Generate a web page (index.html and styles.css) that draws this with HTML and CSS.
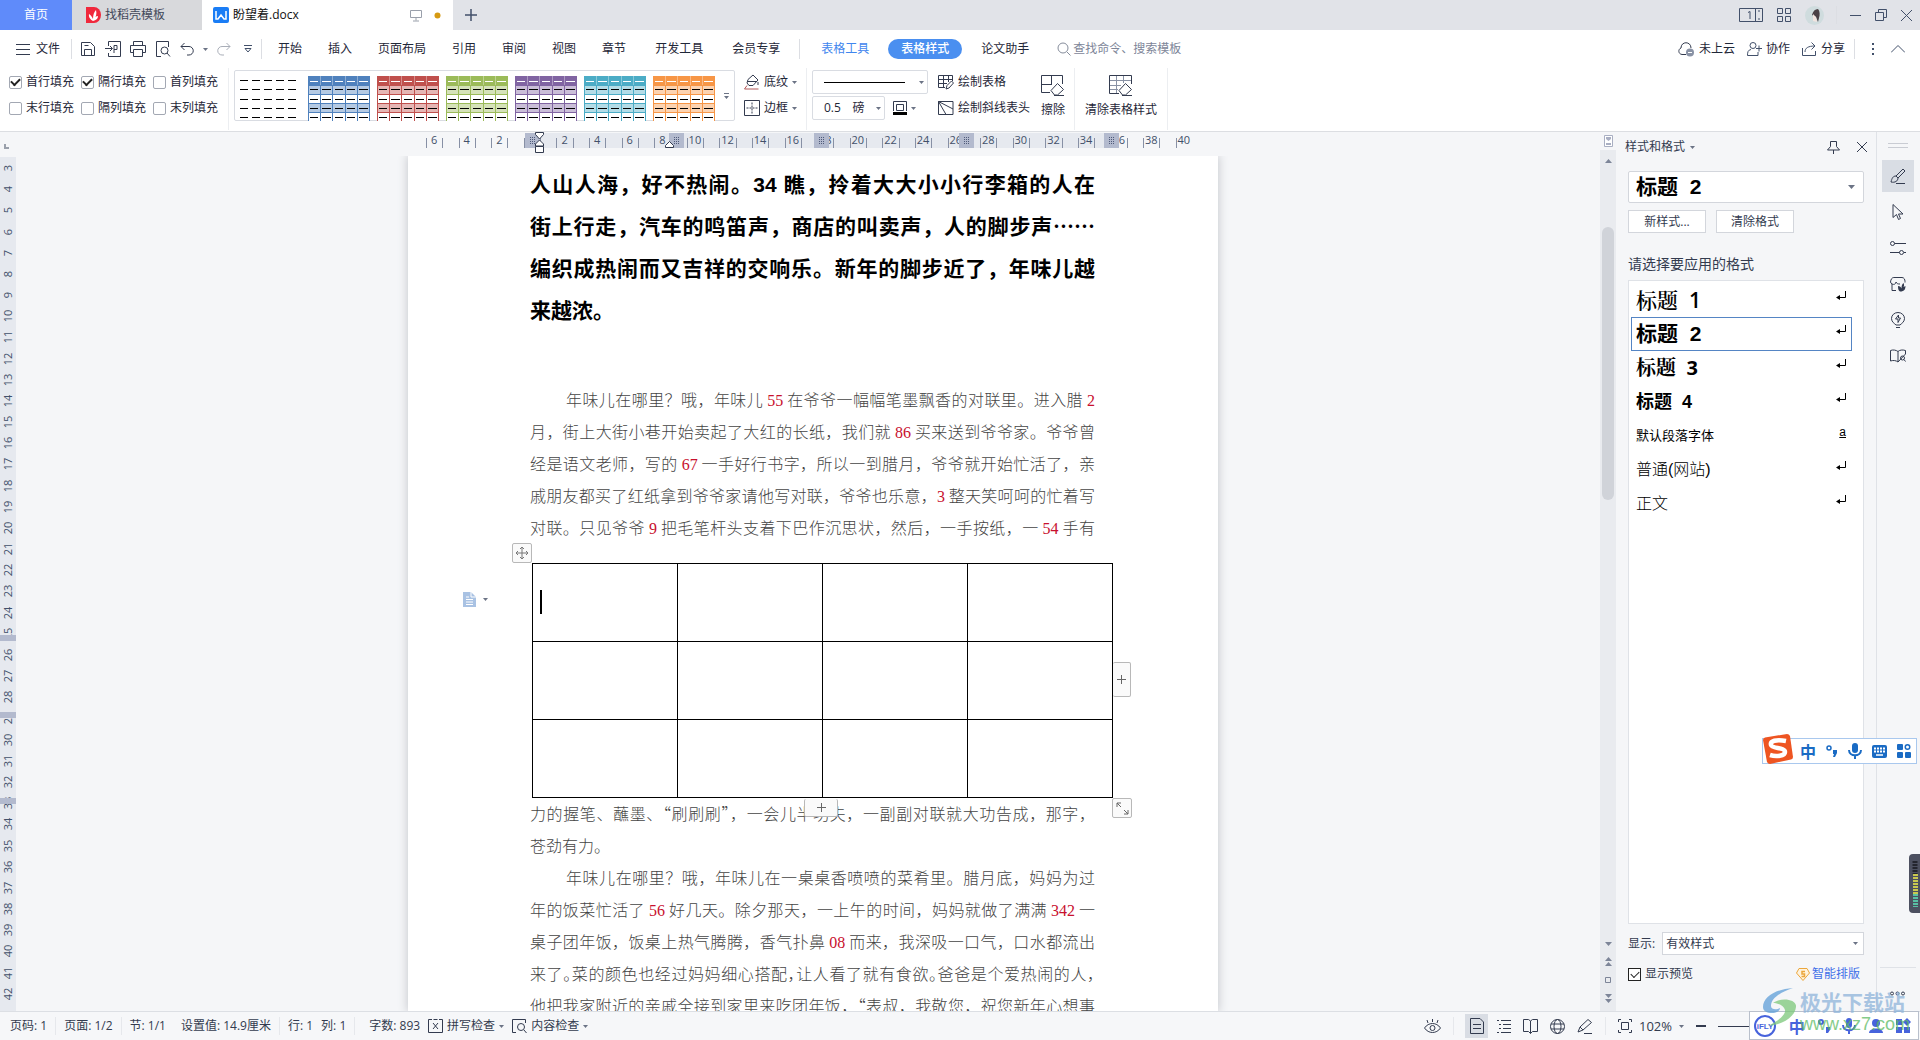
FILE: index.html
```html
<!DOCTYPE html>
<html lang="zh-CN">
<head>
<meta charset="utf-8">
<title>盼望着.docx</title>
<link rel="stylesheet" href="styles.css">
</head>
<body>
<svg class="defs" aria-hidden="true">
  <symbol id="thumb" viewBox="0 0 62 45">
    <rect width="62" height="45" fill="#fff"/>
    <rect width="62" height="9" fill="currentColor"/>
    <path d="M0 9h62v9H0zM0 27h62v9H0z" fill="currentColor" fill-opacity=".42"/>
    <path d="M.5 9v36M12.5 9v36M24.5 9v36M37.5 9v36M49.5 9v36M61.5 9v36M0 9.500h62M0 18.500h62M0 27.500h62M0 36.500h62" stroke="currentColor" fill="none"/>
    <path d="M12.500 0v9M24.500 0v9M37.500 0v9M49.500 0v9" stroke="#fff" stroke-opacity=".35"/>
    <path d="M2 5.500h8M14 5.500h9M27 5.500h8M39 5.500h8M51 5.500h9" stroke="#fff"/>
    <path d="M2 13.500h8M14 13.500h9M27 13.500h8M39 13.500h8M51 13.500h9M2 23.500h8M14 23.500h9M27 23.500h8M39 23.500h8M51 23.500h9M2 32.500h8M14 32.500h9M27 32.500h8M39 32.500h8M51 32.500h9M2 41.500h8M14 41.500h9M27 41.500h8M39 41.500h8M51 41.500h9" stroke="#000"/>
  </symbol>
  <symbol id="ret" viewBox="0 0 10 10"><path d="M9.500 0v6.500H2" fill="none" stroke="#000"/><path d="M0 6.500L4 4v5z"/></symbol>
  <symbol id="mic" viewBox="0 0 14 16"><rect x="4" width="6" height="10" rx="3" fill="currentColor"/><path d="M1 7c0 7 12 7 12 0M7 12v4" fill="none" stroke="currentColor" stroke-width="2"/></symbol>
</svg>

<header class="tabbar">
  <button class="tab tab-home">首页</button>
  <button class="tab tab-tpl">
    <svg width="15" height="16" viewBox="0 0 15 16"><path d="M0 0h8a7 8 0 0 1 0 16H0z" fill="#f0283c"/><path d="M7 14C2 11 3 8 3 7c2 1 3 3 4 5 0-4 1-7 3-9 1 4 0 7-2 9 1-2 2-3 4-3 0 3-2 4-5 5z" fill="#fff"/></svg>
    找稻壳模板</button>
  <button class="tab tab-doc">
    <svg width="16" height="16" viewBox="0 0 16 16"><rect width="16" height="16" rx="2" fill="#1a7df5"/><path d="M3 4v8h2l3-4 3 4h2V4" fill="none" stroke="#fff" stroke-width="1.500"/></svg>
    <span>盼望着.docx</span>
    <svg class="push" width="12" height="13" viewBox="0 0 12 13" fill="none" stroke="#9aa0ab"><path d="M.5 1.500h11v7H.500zM6 8.500v3M3 12h6"/></svg>
    <svg width="7" height="7"><circle cx="3.500" cy="3.500" r="3" fill="#d69a12"/></svg>
  </button>
  <button class="icon-btn plus" aria-label="新建"><svg width="12" height="12" viewBox="0 0 12 12"><path d="M6 0v12M0 6h12" stroke="#42506a" stroke-width="1.500"/></svg></button>
  <div class="win">
    <svg width="24" height="14" viewBox="0 0 24 14" fill="none" stroke="#42506a"><path d="M.5.500h23v13H.500zM16.500.500v13M19 3h2M19 11h2M9 4.500l2-1V11"/></svg>
    <svg width="14" height="14" viewBox="0 0 14 14" fill="none" stroke="#42506a"><path d="M.5.500h5v5h-5zM8.500.500h5v5h-5zM.5 8.500h5v5h-5zM8.500 8.500h5v5h-5z"/></svg>
    <svg width="19" height="19" viewBox="0 0 19 19"><circle cx="9.500" cy="9.500" r="9.500" fill="#cfdcde"/><path d="M7 9c1-4 3-6 6-6 2 2 2 6 1 9l-1 4-2-5z" fill="#4a4046"/><path d="M8 8l3 3 1 5-4-1z" fill="#f2e4e0"/></svg>
    <span class="vsep"></span>
    <svg width="11" height="11" viewBox="0 0 11 11" stroke="#42506a"><path d="M0 5.500h11"/></svg>
    <svg width="12" height="12" viewBox="0 0 12 12" fill="none" stroke="#42506a"><path d="M.5 3.500h8v8h-8zM3.500 3V.500h8v8H9"/></svg>
    <svg width="11" height="11" viewBox="0 0 11 11" stroke="#42506a"><path d="M0 0l11 11M11 0L0 11"/></svg>
  </div>
</header>

<nav class="menubar">
  <button class="file"><svg width="14" height="11" viewBox="0 0 14 11" stroke="#333b4f"><path d="M0 .5h14M0 5.500h14M0 10.500h14"/></svg>文件</button>
  <span class="vsep tall"></span>
  <div class="quick">
    <svg width="16" height="16" viewBox="0 0 16 16" fill="none" stroke="#333b4f"><path d="M1.500 1.500h9l4 4v9h-13zM4.500 14V8.500h7V14M4.500 4.500h4"/></svg>
    <svg width="16" height="16" viewBox="0 0 16 16" fill="none" stroke="#333b4f"><path d="M3.500 5V.500h12v15h-12V12M0 7.500h7M5 5l2.500 2.500L5 10M9 12V4.500h3v4H9"/></svg>
    <svg width="16" height="16" viewBox="0 0 16 16" fill="none" stroke="#333b4f"><path d="M3.500 4.500v-4h9v4M3 11.500H.500v-7h15v7H13M3.500 8.500h9v7h-9z"/></svg>
    <svg width="16" height="16" viewBox="0 0 16 16" fill="none" stroke="#333b4f"><path d="M6 15.500H1.500V.500h12V6M12 12l3 3.500"/><circle cx="9.500" cy="9.500" r="3.500"/></svg>
    <svg width="14" height="14" viewBox="0 0 14 14" fill="none" stroke="#333b4f"><path d="M4.500 1L1 4.500 4.500 8M1 4.500h8a4 4 0 0 1 0 8.500H7"/></svg>
    <svg class="caret" width="5" height="3" viewBox="0 0 5 3"><path d="M0 0h5L2.500 3z"/></svg>
    <svg width="14" height="14" viewBox="0 0 14 14" fill="none" stroke="#a9aeb8"><path d="M9.500 1L13 4.500 9.500 8M13 4.500H5A4 4 0 0 0 5 13h2"/></svg>
    <svg class="last" width="8" height="8" viewBox="0 0 8 8" fill="none" stroke="#42506a"><path d="M0 .5h8M1 3.500h6L4 7z"/></svg>
  </div>
  <span class="vsep tall"></span>
  <div class="menu">
    <button>开始</button><button>插入</button><button>页面布局</button><button>引用</button><button>审阅</button><button>视图</button><button>章节</button>
  </div>
  <div class="menu more-menu">
    <button>开发工具</button><button>会员专享</button>
  </div>
  <span class="vsep tall"></span>
  <div class="menu ctx">
    <button class="blue">表格工具</button><button class="pill">表格样式</button><button>论文助手</button>
  </div>
  <label class="search"><svg width="14" height="14" viewBox="0 0 14 14" fill="none" stroke="#858c9b"><circle cx="6" cy="6" r="5"/><path d="M10 10l3.500 3.500"/></svg><input type="text" placeholder="查找命令、搜索模板"></label>
  <div class="share">
    <button><svg width="17" height="15" viewBox="0 0 17 15" fill="none" stroke="#333b4f"><path d="M8 12.500H4C0 12 0 7 3 6c0-7 10-7 10 0"/><circle cx="12" cy="10.500" r="4" fill="#8992a5" stroke="none"/><path d="M10 10.500h4" stroke="#fff"/></svg>未上云</button>
    <button><svg width="15" height="14" viewBox="0 0 15 14" fill="none" stroke="#42506a"><circle cx="6" cy="3.500" r="3"/><path d="M4 7.500C1 8 .5 10 .5 13.500h10.500V10M9 6.500h6M12 3.500v6"/></svg>协作</button>
    <button><svg width="15" height="14" viewBox="0 0 15 14" fill="none" stroke="#42506a"><path d="M.5 6v7.500h13V9M3 10c0-4 3-6 10-6M9.500.500L13 4 9.500 7.500"/></svg>分享</button>
    <span class="vsep tall"></span>
    <svg width="3" height="12" viewBox="0 0 3 12" fill="#42506a"><path d="M0 0h2v2H0zM0 5h2v2H0zM0 10h2v2H0z"/></svg>
    <svg class="fold" width="14" height="8" viewBox="0 0 14 8" fill="none" stroke="#42506a"><path d="M0 7.500l7-7 7 7"/></svg>
  </div>
</nav>

<section class="ribbon">
  <div class="checks">
    <label><input type="checkbox" checked>首行填充</label><label><input type="checkbox" checked>隔行填充</label><label><input type="checkbox">首列填充</label>
    <label><input type="checkbox">末行填充</label><label><input type="checkbox">隔列填充</label><label><input type="checkbox">末列填充</label>
  </div>
  <span class="vsep full"></span>
  <div class="gallery">
    <svg width="62" height="45" viewBox="0 0 62 45"><path d="M1 4.500h59M1 13.500h59M1 23.500h59M1 32.500h59M1 41.500h59" stroke="#000" stroke-dasharray="8 4"/></svg>
    <svg class="g1" width="62" height="45"><use href="#thumb"/></svg>
    <svg class="g2" width="62" height="45"><use href="#thumb"/></svg>
    <svg class="g3" width="62" height="45"><use href="#thumb"/></svg>
    <svg class="g4" width="62" height="45"><use href="#thumb"/></svg>
    <svg class="g5" width="62" height="45"><use href="#thumb"/></svg>
    <svg class="g6" width="62" height="45"><use href="#thumb"/></svg>
    <button class="icon-btn more" aria-label="更多样式"><svg class="caret" width="5" height="6" viewBox="0 0 5 6"><path d="M0 0h5v1H0zM0 3h5L2.500 6z"/></svg></button>
  </div>
  <div class="col">
    <button class="tool"><svg width="16" height="16" viewBox="0 0 16 16" fill="none" stroke="#333b4f"><path d="M4 5.500L9 1l5 5-5 5.500H5L3 9zM3 7.500h10"/><path d="M14 8v3"/><path d="M3 11.500L.500 15h14" stroke="#b05858"/></svg>底纹<svg class="caret" width="5" height="3"><path d="M0 0h5L2.500 3z"/></svg></button>
    <button class="tool"><svg width="16" height="16" viewBox="0 0 16 16" fill="none" stroke="#333b4f"><path d="M.5.500h15v15H.500z"/><path d="M8 2.500v11M2.500 8h11" stroke-dasharray="2 1"/></svg>边框<svg class="caret" width="5" height="3"><path d="M0 0h5L2.500 3z"/></svg></button>
  </div>
  <span class="vsep full"></span>
  <div class="col lines">
    <button class="combo line" aria-label="线型"><i></i><svg class="caret" width="5" height="3"><path d="M0 0h5L2.500 3z"/></svg></button>
    <div class="row">
      <button class="combo weight"><span>0.5</span><span>磅</span><svg class="caret" width="5" height="3"><path d="M0 0h5L2.500 3z"/></svg></button>
      <button class="tool" aria-label="边框颜色"><svg width="14" height="14" viewBox="0 0 14 14" fill="none"><path d="M.5 10V.500h13V10M3.500 9.500v-6h7v6z" stroke="#333b4f"/><path d="M0 11h14v3H0z" fill="#000"/></svg><svg class="caret" width="5" height="3"><path d="M0 0h5L2.500 3z"/></svg></button>
    </div>
  </div>
  <div class="col draw">
    <button class="tool"><svg width="16" height="15" viewBox="0 0 16 15" fill="none" stroke="#333b4f"><path d="M7 12.500H.500V.500h14V6M.5 4.500h14M.5 8.500H9M5.500.500v12M10.500.500V7M8 14l1-3.500L13.500 6l2 2L11 13z"/></svg>绘制表格</button>
    <button class="tool"><svg width="16" height="14" viewBox="0 0 16 14" fill="none" stroke="#333b4f"><path d="M.5.500h14.500v13H.500zM.5.500L15 8M.5.500L8 13.500"/></svg>绘制斜线表头</button>
  </div>
  <button class="big"><svg width="24" height="21" viewBox="0 0 24 21" fill="none" stroke="#333b4f"><path d="M9 17.500H.500V.500h21V9M10.500.500v9M.5 9.500H11"/><path d="M10 15.500l6.500-7 6 6-6 5.500h-3zM13 20.500h10"/></svg>擦除</button>
  <span class="vsep full"></span>
  <button class="big wide"><svg width="24" height="21" viewBox="0 0 24 21" fill="none" stroke="#333b4f"><path d="M10 18.500H.500V.500h22V9"/><path d="M1 5.500h21M1 10.500h11M1 14.500h8M7.500 1v17M14.500 1v7" stroke="#8992a5"/><path d="M10 15.500l6.500-7 6 6-6 5.500h-3zM13 20.500h10"/></svg>清除表格样式</button>
  <span class="vsep full"></span>
</section>

<main class="work">
  <aside class="vruler">
    <div class="vcorner"><svg width="5" height="5"><path d="M1 0v4h4" fill="none" stroke="#9aa0ab" stroke-width="2"/></svg></div>
    <div class="vnums"><i>3</i><i>4</i><i>5</i><i>6</i><i>7</i><i>8</i><i>9</i><i>10</i><i>11</i><i>12</i><i>13</i><i>14</i><i>15</i><i>16</i><i>17</i><i>18</i><i>19</i><i>20</i><i>21</i><i>22</i><i>23</i><i>24</i><i>25</i><i>26</i><i>27</i><i>28</i><i>29</i><i>30</i><i>31</i><i>32</i><i>33</i><i>34</i><i>35</i><i>36</i><i>37</i><i>38</i><i>39</i><i>40</i><i>41</i><i>42</i>
      <b class="vm1"></b><b class="vm2"></b><b class="vm3"></b></div>
  </aside>
  <div class="canvas">
    <div class="hruler"><div class="hnums">
      <i>6</i><i></i><i>4</i><i></i><i>2</i><i></i><i></i><i></i><i>2</i><i></i><i>4</i><i></i><i>6</i><i></i><i>8</i><i></i><i>10</i><i></i><i>12</i><i></i><i>14</i><i></i><i>16</i><i></i><i>18</i><i></i><i>20</i><i></i><i>22</i><i></i><i>24</i><i></i><i>26</i><i></i><i>28</i><i></i><i>30</i><i></i><i>32</i><i></i><i>34</i><i></i><i>36</i><i></i><i>38</i><i></i><i>40</i><i></i>
      </div>
      <b class="hm1"></b><b class="hm2"></b><b class="hm3"></b><b class="hm4"></b><b class="hm5"></b>
      <svg class="indent" width="10" height="21" viewBox="0 0 10 21" fill="#fff" stroke="#333b4f"><path d="M.5.500h8v2l-4 4.500-4-4.500zM4.500 8l4 4v2h-8v-2zM.5 14.500h8v6h-8z"/></svg>
      <svg class="indent2" width="9" height="7" viewBox="0 0 9 7" fill="#fff" stroke="#333b4f"><path d="M4.500.500l4 4v2h-8v-2z"/></svg>
    </div>
    <article class="page">
      <div class="heading">
        <p>人山人海，好不热闹。34 瞧，拎着大大小小行李箱的人在</p>
        <p>街上行走，汽车的鸣笛声，商店的叫卖声，人的脚步声⋯⋯</p>
        <p>编织成热闹而又吉祥的交响乐。新年的脚步近了，年味儿越</p>
        <p class="end">来越浓。</p>
      </div>
      <div class="text">
        <p class="first">年味儿在哪里？哦，年味儿 <em>55</em> 在爷爷一幅幅笔墨飘香的对联里。进入腊 <em>2</em></p>
        <p>月，街上大街小巷开始卖起了大红的长纸，我们就 <em>86</em> 买来送到爷爷家。爷爷曾</p>
        <p>经是语文老师，写的 <em>67</em> 一手好行书字，所以一到腊月，爷爷就开始忙活了，亲</p>
        <p>戚朋友都买了红纸拿到爷爷家请他写对联，爷爷也乐意，<em>3</em> 整天笑呵呵的忙着写</p>
        <p>对联。只见爷爷 <em>9</em> 把毛笔杆头支着下巴作沉思状，然后，一手按纸，一 <em>54</em> 手有</p>
      </div>
      <div class="tablewrap">
        <table><tbody>
          <tr><td><span class="cursor"></span></td><td></td><td></td><td></td></tr>
          <tr><td></td><td></td><td></td><td></td></tr>
          <tr><td></td><td></td><td></td><td></td></tr>
        </tbody></table>
        <button class="h move" aria-label="移动表格"><svg width="14" height="14" viewBox="0 0 14 14" fill="none" stroke="#777"><path d="M7 1v12M1 7h12M5 3l2-2 2 2M5 11l2 2 2-2M3 5L1 7l2 2M11 5l2 2-2 2"/></svg></button>
        <button class="h addcol" aria-label="添加列"><svg width="9" height="9" viewBox="0 0 9 9"><path d="M4.500 0v9M0 4.500h9" stroke="#666"/></svg></button>
        <button class="h addrow" aria-label="添加行"><svg width="9" height="9" viewBox="0 0 9 9"><path d="M4.500 0v9M0 4.500h9" stroke="#666"/></svg></button>
        <button class="h resize" aria-label="调整大小"><svg width="13" height="13" viewBox="0 0 13 13" stroke="#666" fill="none"><path d="M1 5V1h4M1 1l4 4M12 8v4H8M12 12L8 8"/></svg></button>
        <button class="h docopt" aria-label="版式"><svg width="13" height="15" viewBox="0 0 13 15"><path d="M0 0h8l5 5v10H0z" fill="#a9c2e3"/><path d="M8 0v5h5M3 5h3M3 7.500h7M3 10h7M3 12.500h7" stroke="#fff" fill="none"/></svg><svg class="caret" width="5" height="3"><path d="M0 0h5L2.500 3z"/></svg></button>
      </div>
      <div class="text">
        <p>力的握笔、蘸墨、“刷刷刷”，一会儿半功夫，一副副对联就大功告成，那字，</p>
        <p class="end">苍劲有力。</p>
        <p class="first">年味儿在哪里？哦，年味儿在一桌桌香喷喷的菜肴里。腊月底，妈妈为过</p>
        <p>年的饭菜忙活了 <em>56</em> 好几天。除夕那天，一上午的时间，妈妈就做了满满 <em>342</em> 一</p>
        <p>桌子团年饭，饭桌上热气腾腾，香气扑鼻 <em>08</em> 而来，我深吸一口气，口水都流出</p>
        <p class="tight">来了。菜的颜色也经过妈妈细心搭配，让人看了就有食欲。爸爸是个爱热闹的人，</p>
        <p>他把我家附近的亲戚全接到家里来吃团年饭，“表叔，我敬您，祝您新年心想事</p>
      </div>
    </article>
  </div>
  <div class="scroll">
    <svg width="9" height="12" viewBox="0 0 9 12"><path d="M.5.500h8v11h-8z" fill="#fff" stroke="#a9afc2"/><path d="M2 2h5v2L4.500 6 2 4zM2 8h5v2H2z" fill="#a9afc2"/></svg>
    <div class="track">
      <svg width="7" height="4"><path d="M0 4h7L3.500 0z"/></svg>
      <span class="thumb"></span>
      <svg width="7" height="4"><path d="M0 0h7L3.500 4z"/></svg>
      <svg width="7" height="9"><path d="M0 4h7L3.500 0zM0 9h7L3.500 5z"/></svg>
      <svg width="7" height="6"><path d="M.5.500h5v5h-5z" fill="none" stroke="#7d8598"/></svg>
      <svg width="7" height="9"><path d="M0 0h7L3.500 4zM0 5h7L3.500 9z"/></svg>
    </div>
  </div>
  <aside class="panel">
    <div class="phead"><span>样式和格式</span><svg class="caret" width="5" height="3"><path d="M0 0h5L2.500 3z"/></svg>
      <svg class="push" width="14" height="13" viewBox="0 0 14 13" fill="none" stroke="#333b4f"><path d="M3.500.500h6v5l3 3.500H.500l3-3.500zM6.500 9v4"/></svg>
      <svg width="10" height="10" viewBox="0 0 10 10" stroke="#333b4f"><path d="M0 0l10 10M10 0L0 10"/></svg></div>
    <button class="cur"><span>标题&nbsp; 2</span><svg class="caret" width="7" height="4"><path d="M0 0h7L3.500 4z"/></svg></button>
    <div class="btns"><button>新样式...</button><button>清除格式</button></div>
    <h2>请选择要应用的格式</h2>
    <ul class="styles">
      <li class="s1">标题&nbsp; 1<svg width="10" height="10"><use href="#ret"/></svg></li>
      <li class="s2 on">标题&nbsp; 2<svg width="10" height="10"><use href="#ret"/></svg></li>
      <li class="s3">标题&nbsp; 3<svg width="10" height="10"><use href="#ret"/></svg></li>
      <li class="s4">标题&nbsp; 4<svg width="10" height="10"><use href="#ret"/></svg></li>
      <li class="s5">默认段落字体<u>a</u></li>
      <li class="s6">普通(网站)<svg width="10" height="10"><use href="#ret"/></svg></li>
      <li class="s6">正文<svg width="10" height="10"><use href="#ret"/></svg></li>
    </ul>
    <div class="show"><label for="show">显示:</label><div class="selwrap"><select id="show"><option>有效样式</option></select><svg class="caret" width="5" height="3"><path d="M0 0h5L2.500 3z"/></svg></div></div>
    <div class="pfoot"><label><input class="dark" type="checkbox" checked>显示预览</label>
      <a href="#"><svg width="14" height="13" viewBox="0 0 14 13"><path d="M3 .5h8L13.500 5 7 12.500.500 5z" fill="#fff3dd" stroke="#eba63c"/><path d="M9 3.500H6v2.500h2.500v2.500h-3" fill="none" stroke="#eba63c" stroke-width="1.500"/></svg>智能排版</a></div>
  </aside>
  <aside class="side">
    <span class="grip"></span>
    <button class="on" aria-label="样式"><svg width="16" height="16" viewBox="0 0 16 16" fill="none" stroke="#333b4f"><path d="M6 8l7-7 2 2-7 7zM6 8c-3 0-4 2-5 6 4 1 7-1 7-4M6 15.500h9"/></svg></button>
    <button aria-label="选择"><svg width="14" height="16" viewBox="0 0 14 16" fill="none" stroke="#333b4f"><path d="M2 .5v13l3.500-3 2 5 2-1-2-4.500H12z"/></svg></button>
    <button aria-label="设置"><svg width="16" height="14" viewBox="0 0 16 14" fill="none" stroke="#333b4f"><circle cx="2.500" cy="2.500" r="2"/><path d="M4.500 2.500H16M0 11.500h9.500M14 11.500h2"/><circle cx="11.500" cy="11.500" r="2"/></svg></button>
    <button aria-label="素材"><svg width="16" height="15" viewBox="0 0 16 15" fill="none" stroke="#333b4f"><path d="M6 13.500H2V7C0 6 .5 4 1 3c.500-2 2-2.500 3-2.500h8c2 0 3 2 3 4v1M2 7c2 1 4 0 4-2 1 2 2 2 4 2"/><path d="M8 9c2 0 3 1 3.500 2.500C11.500 9 12 7 13.500 6c1 2 .5 3 0 4l2-1c0 3-1 5-4 5.500S8 12 8 9z" fill="#333b4f" stroke="none"/></svg></button>
    <button aria-label="灵感"><svg width="14" height="16" viewBox="0 0 14 16" fill="none" stroke="#333b4f"><path d="M5 13C3.500 11.500.500 10 .5 6.500a6.500 6 0 0 1 13 0C13.500 10 10.500 11.500 9 13zM5 15.500h4M7.500 3L4.500 7H7v3.500L9.500 6H7.500z"/></svg></button>
    <button aria-label="帮助"><svg width="16" height="14" viewBox="0 0 16 14" fill="none" stroke="#333b4f"><path d="M15.500 5V1.500c-3-1-6-.5-7.500 1C6 1 3 .5.500 1.500v10.500c3-1 5.500-.5 7.500 1zM8 2.500v10.500"/><circle cx="12.500" cy="9" r="2"/><path d="M14 10.500l1.500 2"/></svg></button>
    <span class="sidemore"><svg width="15" height="5" viewBox="0 0 15 5" fill="none" stroke="#333b4f"><circle cx="2" cy="2.500" r="1.500"/><circle cx="7.500" cy="2.500" r="1.500"/><circle cx="13" cy="2.500" r="1.500"/></svg></span>
  </aside>
</main>

<footer class="status">
  <span>页码: 1</span><i class="vsep"></i><span>页面: 1/2</span><i class="vsep"></i><span>节: 1/1</span><span class="set">设置值: 14.9厘米</span><i class="vsep"></i><span>行: 1</span><span>列: 1</span><i class="vsep"></i><span class="count">字数: 893</span>
  <button><svg width="15" height="14" viewBox="0 0 15 14" fill="none" stroke="#333b4f"><path d="M4 .5H.500v13h14V.500H11M5 4l5 6M10 4l-5 6M5.500.500h4"/></svg>拼写检查<svg class="caret" width="5" height="3"><path d="M0 0h5L2.500 3z"/></svg></button>
  <button><svg width="15" height="14" viewBox="0 0 15 14" fill="none" stroke="#333b4f"><path d="M4 13.500H.500V.500h13V4M12 11l2.500 3"/><circle cx="9" cy="8" r="3.500"/></svg>内容检查<svg class="caret" width="5" height="3"><path d="M0 0h5L2.500 3z"/></svg></button>
  <div class="views">
    <svg width="17" height="14" viewBox="0 0 17 14" fill="none" stroke="#333b4f"><path d="M.5 9c4-6 12-6 16 0-4 6-12 6-16 0zM8.500 0v3M3 1l1 3M14 1l-1 3"/><circle cx="8.500" cy="9" r="2.500"/></svg>
    <i class="vsep"></i>
    <span class="von"><svg width="14" height="16" viewBox="0 0 14 16" fill="none" stroke="#333b4f"><path d="M.5.500h9.500l3.500 3.500v11.500H.500zM3 6.500h8M3 10.500h8"/></svg></span>
    <svg width="14" height="14" viewBox="0 0 14 14" stroke="#333b4f"><path d="M0 1.500h2M4 1.500h10M2 5.500h2M6 5.500h8M2 9.500h2M6 9.500h8M0 13.500h2M4 13.500h10"/></svg>
    <svg width="15" height="15" viewBox="0 0 15 15" fill="none" stroke="#333b4f"><path d="M7.500 2v12.500M7.500 2l-2-1.500h-5v12h5l2 2 2-2h5V.500h-5z"/></svg>
    <svg width="15" height="15" viewBox="0 0 15 15" fill="none" stroke="#333b4f"><circle cx="7.500" cy="7.500" r="7"/><ellipse cx="7.500" cy="7.500" rx="3.500" ry="7"/><path d="M1 5h13M1 10h13"/></svg>
    <svg width="16" height="15" viewBox="0 0 16 15" fill="none" stroke="#333b4f"><path d="M1 13l2-5L11 .5 14.500 3.500 6 11zM3 8l3 3M7 14.500h8"/></svg>
    <i class="vsep"></i>
    <svg width="14" height="14" viewBox="0 0 14 14" fill="none" stroke="#333b4f"><path d="M.5 3V.500H3M11 .5h2.500V3M13.500 11v2.500H11M3 13.500H.500V11M3.500 3.500h7v7h-7z"/></svg>
    <span class="zoom">102%</span><svg class="caret" width="5" height="3"><path d="M0 0h5L2.500 3z"/></svg>
    <svg width="10" height="2"><path d="M0 0h10v2H0z" fill="#333b4f"/></svg>
    <span class="slider"></span>
  </div>
</footer>

<div class="ime sogou">
  <svg class="slogo" width="32" height="30" viewBox="0 0 32 30"><path d="M1 6q0-2 2-2.500L25 0q2 0 3 2l3 21q0 2-2 2.500L8 30q-2 0-3-2z" fill="#ee5522"/><path d="M24 7C14 5 8 7 9 11c1 4 14 2 14 7 0 4-9 5-15 3" fill="none" stroke="#fff" stroke-width="4.500"/></svg>
  <b>中</b>
  <svg width="12" height="12" viewBox="0 0 12 12"><circle cx="3" cy="3" r="2" fill="none" stroke="currentColor" stroke-width="1.500"/><path d="M7 5h4v3l-2 4H7l1-3H7z" fill="currentColor"/></svg>
  <svg width="14" height="16"><use href="#mic"/></svg>
  <svg width="15" height="13" viewBox="0 0 15 13"><rect width="15" height="13" rx="2" fill="currentColor"/><path d="M2 3.500h11M2 6.500h11" stroke="#fff" stroke-width="2" stroke-dasharray="2 1"/><path d="M4 10h7" stroke="#fff" stroke-width="1.500"/></svg>
  <svg width="14" height="14" viewBox="0 0 14 14" fill="currentColor"><rect width="6" height="6" rx="1"/><circle cx="10.500" cy="3" r="2.250" fill="none" stroke="currentColor" stroke-width="1.500"/><rect y="8" width="6" height="6" rx="1"/><rect x="8" y="8" width="6" height="6" rx="1"/></svg>
</div>
<svg class="meter" width="11" height="59" viewBox="0 0 11 59"><path d="M11 0H4Q0 0 0 4v51q0 4 4 4h7z" fill="#4c5060"/><path d="M6 7v13" stroke="#23252e" stroke-width="5" stroke-dasharray="2 1"/><path d="M6.500 20v20" stroke="#c8c850" stroke-width="5" stroke-dasharray="2 1"/><path d="M6.500 40v13" stroke="#58c0a4" stroke-width="5" stroke-dasharray="2 1"/></svg>
<div class="ime ifly">
  <svg width="22" height="22" viewBox="0 0 22 22"><circle cx="11" cy="11" r="10" fill="#fff" stroke="#4763dc" stroke-width="2"/><text x="11" y="14" text-anchor="middle" class="iflytext">iFLY</text></svg>
  <b>中</b>
  <svg width="12" height="14" viewBox="0 0 12 14"><circle cx="3" cy="3" r="2" fill="none" stroke="currentColor" stroke-width="2"/><path d="M8 8h4v3l-2 3H8z" fill="currentColor"/></svg>
  <svg width="14" height="16"><use href="#mic"/></svg>
  <svg width="14" height="14" viewBox="0 0 14 14" fill="currentColor"><circle cx="7" cy="4" r="4"/><path d="M0 14c0-6 14-6 14 0z"/></svg>
  <svg width="15" height="15" viewBox="0 0 15 15" fill="currentColor"><path d="M0 1h6v6H0zM0 9h6v6H0zM8 9h6v6H8zM11 0l4 4-4 4-4-4z"/></svg>
</div>
<div class="mark">
  <svg width="36" height="38" viewBox="0 0 36 38"><path d="M33 0C16 1 3 9 3 19c0 4 4 6 9 6 4 0 8-2 8-5-3 2-9 2-9-2C11 10 21 4 33 0z" fill="#5f9fd8"/><path d="M13 15c8-6 24-4 23 4-1 10-14 18-28 19 10-5 18-11 17-16-1-4-6-7-12-7z" fill="#7cc87a"/></svg>
  <div><strong>极光下载站</strong><span>www.xz7.com</span></div>
</div>
</body>
</html>
```
FILE: styles.css
```css
* { box-sizing: border-box; }
body {
  margin: 0;
  height: 100vh;
  display: flex;
  flex-direction: column;
  overflow: hidden;
  position: relative;
  background: #f5f6f8;
  color: #1f2738;
  font: 12px/16px "Open Sans", "Noto Sans CJK SC", sans-serif;
}
button, input, select { font: inherit; color: inherit; }
button { border: 0; background: none; padding: 0; white-space: nowrap; }
p, h2, ul { margin: 0; padding: 0; }
i, em { font-style: normal; }
svg { display: block; flex: none; }
.defs { position: absolute; width: 0; height: 0; }
.caret { fill: #6b7385; }
.push { margin-left: auto; }
.vsep { width: 1px; height: 18px; background: #dcdee3; flex: none; }
.vsep.tall { height: 20px; }
.vsep.full { height: 62px; background: #eceef1; }

/* title tabs */
.tabbar { display: flex; height: 30px; background: #e1e3e8; flex: none; }
.tab { display: flex; align-items: center; }
.tab-home { width: 72px; justify-content: center; background: #5f8bfa; color: #fff; }
.tab-tpl { width: 130px; gap: 4px; padding-left: 14px; background: #d8d9dc; color: #42485a; }
.tab-doc { width: 251px; gap: 4px; padding: 0 12px 0 11px; background: #fff; color: #111; }
.tab-doc .push { margin-right: 8px; margin-left: auto; }
.plus { padding: 0 12px; }
.win { margin-left: auto; display: flex; align-items: center; gap: 14px; padding-right: 8px; }
.win .vsep { margin: 0 -1px 0 -2px; }

/* menu row */
.menubar { display: flex; align-items: center; height: 38px; background: #fff; flex: none; }
.file { display: flex; align-items: center; gap: 6px; padding: 0 11px 0 16px; }
.quick { display: flex; align-items: center; gap: 9px; padding: 0 9px 0 8px; }
.quick .last { margin-left: 4px; }
.menu { display: flex; align-items: center; gap: 26px; padding-left: 16px; }
.menu.more-menu { gap: 29px; padding: 0 19px 0 29px; }
.menu.ctx { gap: 19px; padding-left: 21px; }
.blue { color: #3f86ee; }
.pill { background: #4a8ff0; color: #fff; border-radius: 10px; height: 20px; padding: 0 13px; font-weight: 500; }
.search { display: flex; align-items: center; gap: 2px; margin-left: 28px; }
.search input { width: 130px; border: 0; padding: 0; outline: 0; background: none; }
.search input::placeholder { color: #7d8598; opacity: 1; }
.share { margin-left: auto; display: flex; align-items: center; gap: 12px; padding-right: 15px; }
.share button { display: flex; align-items: center; gap: 4px; }
.share .vsep { margin: 0 5px 0 -3px; }
.share .fold { margin-left: 4px; }

/* ribbon */
.ribbon { display: flex; align-items: flex-start; height: 64px; background: #fff; border-bottom: 1px solid #dcdee2; padding-left: 9px; flex: none; }
.checks { display: grid; grid-template-columns: repeat(3, 72px); row-gap: 10px; padding-top: 6px; width: 219px; }
label { white-space: nowrap; }
.checks label, .pfoot label { display: flex; align-items: center; gap: 4px; }
input[type=checkbox] { appearance: none; width: 13px; height: 13px; margin: 0; border: 1px solid #a3a8b3; border-radius: 2px; background: #fff; display: grid; place-items: center; }
input[type=checkbox]:checked::before { content: ""; width: 7px; height: 4px; border-left: 2px solid #222; border-bottom: 2px solid #222; transform: rotate(-45deg); margin-bottom: 2px; }
.gallery { display: flex; gap: 7px; width: 501px; height: 51px; margin: 2px 9px 0 5px; padding: 5px 0 0 4px; border: 1px solid #d9dce2; border-radius: 2px; }
.gallery .more { margin: -4px 0 0 2px; }
.g1 { color: #4f81bd; } .g2 { color: #c0504d; } .g3 { color: #9bbb59; }
.g4 { color: #8064a2; } .g5 { color: #4bacc6; } .g6 { color: #f79646; }
.col { display: flex; flex-direction: column; gap: 10px; padding-top: 6px; width: 62px; }
.tool { display: flex; align-items: center; gap: 4px; height: 16px; }
.lines { width: 120px; gap: 2px; padding: 2px 0 0 5px; }
.row { display: flex; align-items: center; gap: 8px; }
.combo { display: flex; align-items: center; justify-content: space-between; height: 24px; border: 1px solid #d9dce2; border-radius: 2px; }
.combo.line { width: 116px; padding: 0 3px 0 11px; }
.combo.line i { width: 81px; height: 1px; background: #000; }
.combo.weight { width: 73px; padding: 0 3px 0 11px; }
.draw { width: 103px; margin-left: 11px; }
.big { display: flex; flex-direction: column; align-items: center; gap: 6px; padding-top: 7px; margin-right: 9px; }
.big.wide { margin: 0 10px; }

/* workspace */
.work { flex: 1; min-height: 0; display: flex; }
.vruler { width: 16px; flex: none; display: flex; flex-direction: column; }
.vcorner { height: 25px; padding: 12px 0 0 4px; }
.vnums { flex: 1; display: flex; flex-direction: column; background: #e6e9ef; padding-bottom: 7px; position: relative; color: #42506a; font-size: 11px; }
.vnums i { flex: 1; writing-mode: vertical-rl; transform: rotate(180deg); text-align: center; line-height: 16px; }
.vnums b { position: absolute; left: 0; width: 16px; height: 6px; background: #b3bace; }
.vm1 { top: 56%; } .vm2 { top: 65%; } .vm3 { top: 75%; }
.canvas { flex: 1; min-width: 0; display: flex; flex-direction: column; align-items: center; padding-left: 10px; }
.hruler { width: 810px; height: 24px; flex: none; position: relative; padding: 1px 26px 0 18px; background: linear-gradient(90deg, transparent 117px, #e6e9ef 117px 710px, transparent 710px) 0 1px / 100% 15px no-repeat; }
.hnums { display: grid; grid-template-columns: repeat(47, 1fr); height: 15px; color: #42506a; font-size: 11px; line-height: 14px; }
.hnums i { display: flex; justify-content: center; background: linear-gradient(#8790a5, #8790a5) 0 100% / 1px 10px no-repeat; }
.hnums i:last-child { grid-column: 48; }
.hruler b { position: absolute; top: 1px; width: 15px; height: 15px; padding: 4px; background: #b3bace; }
.hruler b::before { content: ""; display: block; height: 7px; background: conic-gradient(#4f5a7a 25%, transparent 0) 0 0 / 2px 2px; }
.hm1 { left: 117px; } .hm2 { left: 261px; } .hm3 { left: 406px; } .hm4 { left: 551px; } .hm5 { left: 696px; }
.indent { position: absolute; left: 127px; top: 0; }
.indent2 { position: absolute; left: 257px; top: 9px; }
.page { width: 810px; flex: 1; min-height: 0; clip-path: inset(0 -12px); background: #fff; padding: 8px 123px 0 122px; box-shadow: 0 0 9px 1px #c9cbd0; color: #000; }
.heading { margin-bottom: 51px; font: bold 21px/42px "Liberation Sans", "Noto Sans CJK SC", sans-serif; }
.text { font: 300 16px/32px "Noto Sans CJK SC", sans-serif; color: #444; }
.page p { white-space: nowrap; text-align-last: justify; }
.page p.end { text-align-last: left; }
.page p.first { padding-left: 36px; }
.page p.tight { font-feature-settings: "halt"; }
em { color: #c8102e; font-family: "Liberation Serif", serif; font-weight: 400; line-height: 1; }
.tablewrap { position: relative; width: 581px; margin: 20px 0 -1px 2px; }
table { width: 100%; table-layout: fixed; border-collapse: collapse; }
td { height: 78px; border: 1px solid #000; padding: 0 7px; vertical-align: middle; }
.cursor { display: block; width: 2px; height: 24px; background: #000; margin-bottom: 2px; }
.h { position: absolute; display: grid; place-items: center; background: #fafafa; border: 1px solid #b8b8b8; border-radius: 2px; }
.move { left: -20px; top: -20px; width: 20px; height: 20px; }
.addcol { left: 581px; top: 99px; width: 18px; height: 35px; border-left: 0; }
.addrow { left: 272px; top: 236px; width: 34px; height: 18px; border-top: 0; }
.resize { left: 580px; top: 235px; width: 20px; height: 20px; }
.docopt { left: -69px; top: 29px; display: flex; align-items: center; gap: 7px; background: none; border: 0; }

/* scrollbar */
.scroll { width: 16px; flex: none; display: flex; flex-direction: column; align-items: center; padding-top: 3px; }
.track { flex: 1; align-self: stretch; background: #e9ebef; margin-top: 3px; padding: 9px 0 8px; display: flex; flex-direction: column; align-items: center; gap: 11px; fill: #7d8598; }
.track .thumb { width: 12px; height: 273px; border-radius: 6px; background: #d0d3d9; margin: 53px 0 auto; }

/* styles panel */
.panel { width: 261px; flex: none; border-right: 1px solid #dfe2e7; padding: 6px 12px 0 12px; display: flex; flex-direction: column; color: #333b4f; }
.phead { display: flex; align-items: center; gap: 5px; height: 18px; margin: 0 -3px; }
.phead .push { margin-right: 11px; }
.cur { display: flex; align-items: center; justify-content: space-between; height: 32px; margin-top: 15px; padding: 0 8px 0 7px; background: #fff; border: 1px solid #d3d6dc; border-radius: 2px; color: #000; font: bold 21px/30px "Liberation Sans", "Noto Sans CJK SC", sans-serif; }
.btns { display: flex; gap: 10px; margin-top: 7px; }
.btns button { width: 78px; height: 23px; background: #fff; border: 1px solid #d3d6dc; }
h2 { font-size: 14px; line-height: 20px; font-weight: 400; margin: 21px 0 6px; }
.styles { flex: 1; list-style: none; background: #fff; border: 1px solid #dfe2e7; padding: 2px 11px 0 2px; color: #000; }
.styles li { display: flex; justify-content: space-between; align-items: center; height: 34px; padding: 0 5px 0 4px; font: 16px/30px "Liberation Sans", "Noto Sans CJK SC", sans-serif; border: 1px solid transparent; }
.styles li svg, .styles u { margin-bottom: 8px; }
.styles li.on { border-color: #5585c4; }
.styles .s1, .styles .s3 { font-size: 21px; font-weight: 600; font-family: "Open Sans", "Noto Serif CJK SC", "Noto Sans CJK SC", sans-serif; }
.styles .s2 { font-size: 21px; font-weight: 700; }
.styles .s3 { font-size: 20px; font-weight: 700; }
.styles .s4 { font-size: 18px; font-weight: 700; }
.styles .s5 { font-size: 13px; }
.styles .s6 { font-weight: 300; }
.styles u { font: 12px/12px "Liberation Sans", sans-serif; }
.show { display: flex; align-items: center; gap: 7px; margin-top: 8px; }
.selwrap { position: relative; flex: 1; }
.selwrap .caret { position: absolute; right: 6px; top: 10px; }
select { appearance: none; width: 100%; height: 23px; padding: 0 3px; background: #fff; border: 1px solid #d3d6dc; border-radius: 0; }
.pfoot { display: flex; justify-content: space-between; align-items: center; margin: 11px 4px 29px 0; }
.pfoot input.dark { border-color: #222; border-radius: 0; }
.pfoot input.dark:checked::before { border-width: 0 0 1px 1px; }
.pfoot a { display: flex; align-items: center; gap: 2px; color: #3f6fe8; text-decoration: none; }

/* side tools */
.side { width: 43px; flex: none; display: flex; flex-direction: column; align-items: center; gap: 4px; padding: 11px 1px 0 0; }
.grip { width: 20px; height: 5px; border: 1px solid #c9ccd3; border-width: 1px 0; margin-bottom: 8px; }
.side button { width: 32px; height: 32px; display: grid; place-items: center; }
.side .on { background: #d9dde4; }
.sidemore { margin-top: auto; width: 36px; padding: 23px 0 15px 10px; border-top: 1px solid #dfe2e7; }

/* status bar */
.status { height: 29px; flex: none; display: flex; align-items: center; gap: 8px; padding-left: 10px; border-top: 1px solid #dcdfe4; background: #f6f7f9; white-space: nowrap; color: #333b4f; }
.status button { display: flex; align-items: center; gap: 4px; }
.status .set { margin-left: 7px; }
.status .count { margin-left: 6px; }
.status .vsep { background: #e6e8ec; }
.views { margin-left: auto; display: flex; align-items: center; gap: 12px; width: 496px; }
.vsep + .von { margin-left: -1px; }
.von { width: 23px; height: 24px; background: #d9dde4; display: grid; place-items: center; margin-right: -3px; }
.zoom { font-size: 13px; margin: 0 -5px; }
.slider { width: 60px; height: 1px; background: #333b4f; }

/* floating windows */
.ime { position: absolute; display: flex; align-items: center; background: #fff; color: #1a6bc4; }
.ime b { font: bold 16px/20px "Noto Sans CJK SC", sans-serif; }
.sogou { right: 3px; top: 738px; height: 26px; gap: 10px; padding: 0 5px 0 0; border: 1px solid #a9c8ee; }
.slogo { margin: -4px -4px 0 -1px; }
.meter { position: absolute; right: 0; top: 854px; }
.ifly { right: 1px; bottom: 0; width: 170px; height: 29px; justify-content: space-between; padding: 0 7px 0 4px; border: 1px solid #b9c0cc; color: #4763dc; }
.iflytext { font: bold 8px "Liberation Sans", sans-serif; fill: #4763dc; }
.mark { position: absolute; right: 10px; bottom: 6px; display: flex; gap: 4px; opacity: .75; pointer-events: none; }
.mark div { display: flex; flex-direction: column; }
.mark strong { font: bold 21px/26px "Noto Sans CJK SC", sans-serif; color: #8fb4da; }
.mark span { font: 18px/20px "Liberation Sans", sans-serif; color: #5dbb63; }
```
